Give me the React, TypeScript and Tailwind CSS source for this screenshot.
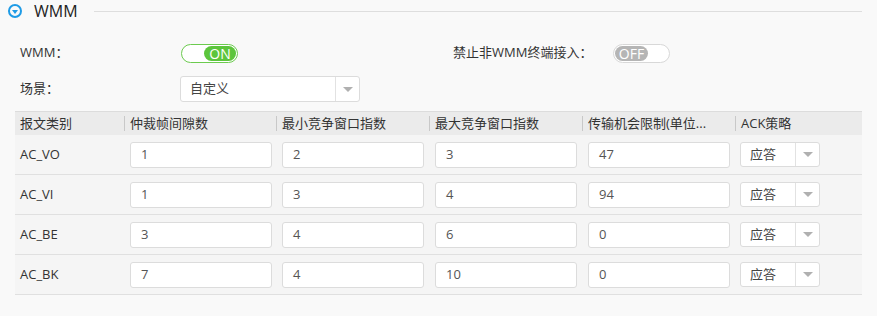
const font = { fontFamily: '"Open Sans", "Noto Sans CJK SC", sans-serif' }

const rows = [
  { name: 'AC_VO', v: ['1', '2', '3', '47'] },
  { name: 'AC_VI', v: ['1', '3', '4', '94'] },
  { name: 'AC_BE', v: ['3', '4', '6', '0'] },
  { name: 'AC_BK', v: ['7', '4', '10', '0'] },
]

const heads = ['仲裁帧间隙数', '最小竞争窗口指数', '最大竞争窗口指数', '传输机会限制(单位...']
const colW = ['w-[152px]', 'w-[153px]', 'w-[153px]', 'w-[153px]']

function Arrow() {
  return <span className="block w-0 h-0 border-l-[5px] border-r-[5px] border-t-[5px] border-l-transparent border-r-transparent border-t-[#b0b0b0]" />
}

function Select({ text, w, h, dividerAt }: { text: string; w: string; h: string; dividerAt: string }) {
  return (
    <div className={`flex items-stretch bg-white border border-[#dcdcdc] rounded-[3px] ${w} ${h}`}>
      <div className={`flex items-center pl-[9px] text-[13px] text-[#444] ${dividerAt} border-r border-[#e2e2e2]`}>{text}</div>
      <div className="flex-1 flex items-center justify-center"><Arrow /></div>
    </div>
  )
}

function Toggle({ on }: { on: boolean }) {
  return on ? (
    <div className="w-[57px] h-[19px] rounded-full border border-[#6ccb4f] bg-white flex items-center justify-end p-[1px]">
      <div className="h-[15px] w-[32px] rounded-full bg-[#5cc53c] text-white text-[14px] leading-[15px] flex items-center justify-center">ON</div>
    </div>
  ) : (
    <div className="w-[57px] h-[19px] rounded-full border border-[#d8d8d8] bg-white flex items-center justify-start p-[1px]">
      <div className="h-[15px] w-[33px] rounded-full bg-[#b5b5b5] text-white text-[14px] leading-[15px] flex items-center justify-center">OFF</div>
    </div>
  )
}

export default function App() {
  return (
    <div className="w-[877px] h-[316px] bg-[#f9f9f9] text-[#333] overflow-hidden" style={font}>
      {/* 标题 */}
      <div className="flex items-center h-[22px] pl-[8px] pr-[15px]">
        <div className="w-[14px] h-[14px] rounded-full border-2 border-[#1e9be6] flex items-center justify-center">
          <span className="block w-0 h-0 border-l-[3.5px] border-r-[3.5px] border-t-[4px] border-l-transparent border-r-transparent border-t-[#1e9be6] mt-[1px]" />
        </div>
        <span className="ml-[12px] text-[16px] text-[#222]">WMM</span>
        <div className="flex-1 ml-[16px] h-px bg-[#dedede]" />
      </div>

      {/* 开关 */}
      <div className="flex items-center h-[22px] mt-[20px] pl-[20px] text-[13px]">
        <span className="w-[161px]">WMM：</span>
        <Toggle on />
        <span className="ml-[215px] w-[160px]">禁止非WMM终端接入：</span>
        <Toggle on={false} />
      </div>

      <div className="flex items-center h-[26px] mt-[12px] pl-[20px] text-[13px]">
        <span className="w-[160px]">场景：</span>
        <Select text="自定义" w="w-[180px]" h="h-[26px]" dividerAt="w-[155px]" />
      </div>

      {/* 表格 */}
      <div className="mt-[9px] ml-[15px] w-[847px] bg-[#f5f5f5] text-[13px]">
        <div className="flex items-center h-[24px] bg-[#ebebeb] border-t border-[#dcdcdc]">
          <div className="w-[109px] pl-[5px]">报文类别</div>
          {heads.map((h, i) => (
            <div key={h} className={`${colW[i]} flex items-center`}>
              <span className="w-px h-[15px] bg-[#c8c8c8]" />
              <span className="pl-[5px] truncate">{h}</span>
            </div>
          ))}
          <div className="flex-1 flex items-center">
            <span className="w-px h-[15px] bg-[#c8c8c8]" />
            <span className="pl-[5px]">ACK策略</span>
          </div>
        </div>
        {rows.map((r) => (
          <div key={r.name} className="flex items-center h-[40px] border-b border-[#e0e0e0]">
            <div className="w-[109px] pl-[5px]">{r.name}</div>
            {r.v.map((v, i) => (
              <div key={i} className={`${colW[i]} pl-[6px]`}>
                <div className="w-[142px] h-[26px] bg-white border border-[#dcdcdc] rounded-[3px] flex items-center pl-[10px] text-[#555]">{v}</div>
              </div>
            ))}
            <div className="flex-1 pl-[5px]">
              <Select text="应答" w="w-[80px]" h="h-[25px]" dividerAt="w-[55px]" />
            </div>
          </div>
        ))}
      </div>
    </div>
  )
}
